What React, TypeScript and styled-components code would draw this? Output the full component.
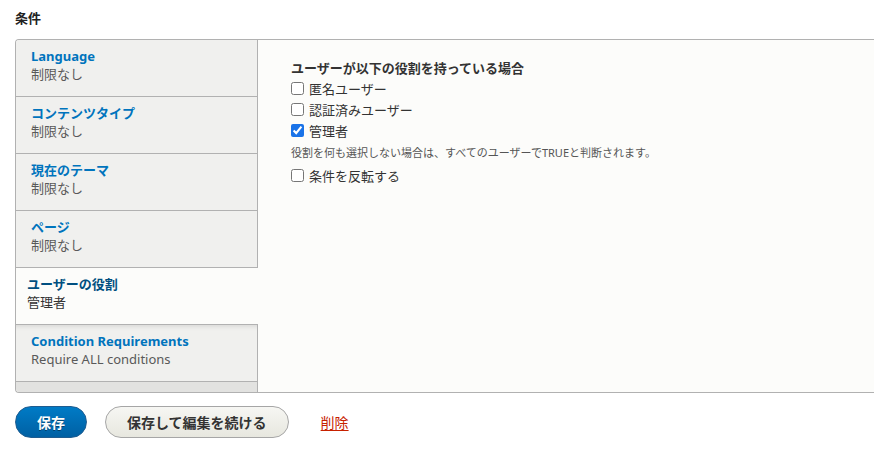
import React from 'react'
import styled, { createGlobalStyle, css } from 'styled-components'

const GlobalStyle = createGlobalStyle`
  html, body {
    margin: 0;
    padding: 0;
    background: #fff;
    overflow: hidden;
  }
  body {
    font-family: 'Noto Sans', 'Noto Sans CJK JP', sans-serif;
    color: #333;
    font-size: 13px;
  }
`

const tabs = [
  { title: 'Language', summary: '制限なし' },
  { title: 'コンテンツタイプ', summary: '制限なし' },
  { title: '現在のテーマ', summary: '制限なし' },
  { title: 'ページ', summary: '制限なし' },
  { title: 'ユーザーの役割', summary: '管理者' },
  { title: 'Condition Requirements', summary: 'Require ALL conditions' },
]

const roles = [
  { label: '匿名ユーザー', checked: false },
  { label: '認証済みユーザー', checked: false },
  { label: '管理者', checked: true },
]

const Page = styled.div`
  width: 900px;
  padding: 9px 0 0 15px;
`

const Heading = styled.h2`
  margin: 0 0 12px;
  font-size: 13px;
  line-height: 18px;
  font-weight: 700;
  color: #222;
`

const TabsBox = styled.div`
  display: flex;
  border: 1px solid #b1b1b1;
  border-right: 0;
  border-radius: 4px 0 0 4px;
  background: #fcfcfa;
  overflow: hidden;
`

const Menu = styled.ul`
  list-style: none;
  margin: 0;
  padding: 0 0 10px;
  width: 241px;
  flex: none;
  background: #e2e2e0;
  border-right: 1px solid #b1b1b1;
`

const MenuItem = styled.li<{ $selected?: boolean; $afterSelected?: boolean }>`
  box-sizing: border-box;
  height: 57px;
  padding: 7px 0 0 15px;
  background: #f0f0ee;
  border-bottom: 1px solid #b1b1b1;
  ${({ $afterSelected }) =>
    $afterSelected &&
    css`
      box-shadow: inset 0 6px 5px -5px rgba(0, 0, 0, 0.12);
    `}
  ${({ $selected }) =>
    $selected &&
    css`
      background: #fcfcfa;
      padding-left: 11px;
      margin-right: -1px;
    `}
`

const TabTitle = styled.a<{ $selected?: boolean }>`
  display: block;
  font-weight: 700;
  font-size: 13px;
  line-height: 18px;
  color: ${({ $selected }) => ($selected ? '#004f80' : '#0074bd')};
  text-decoration: none;
`

const TabSummary = styled.div<{ $selected?: boolean }>`
  font-size: 13px;
  line-height: 18px;
  color: ${({ $selected }) => ($selected ? '#333' : '#595959')};
`

const Pane = styled.div`
  flex: 1;
  padding: 19px 0 0 33px;
`

const FieldTitle = styled.div`
  font-weight: 700;
  font-size: 13px;
  line-height: 18px;
  color: #333;
  margin-bottom: 1px;
`

const CheckRow = styled.label<{ $spaced?: boolean }>`
  display: flex;
  align-items: center;
  gap: 5px;
  height: 21px;
  font-size: 13px;
  color: #333;
  ${({ $spaced }) =>
    $spaced &&
    css`
      margin-top: 4px;
    `}
`

const Checkbox = styled.input`
  margin: 0;
  width: 13px;
  height: 13px;
  accent-color: #1a73e8;
`

const Description = styled.div`
  font-size: 11px;
  line-height: 16px;
  color: #555;
  margin-top: 4px;
`

const Actions = styled.div`
  display: flex;
  align-items: center;
  gap: 18px;
  margin-top: 13px;
`

const Button = styled.button<{ $primary?: boolean }>`
  height: 32px;
  padding: 0 21px;
  border-radius: 20px;
  font-family: 'Noto Sans', 'Noto Sans CJK JP', sans-serif;
  font-size: 14px;
  font-weight: 700;
  cursor: pointer;
  ${({ $primary }) =>
    $primary
      ? css`
          background: linear-gradient(#007bc6, #0060a3);
          border: 1px solid #1e5c90;
          color: #fff;
          text-shadow: 0 1px 0 rgba(0, 0, 0, 0.4);
        `
      : css`
          background: linear-gradient(#f6f6f3, #e7e7df);
          border: 1px solid #a6a6a6;
          color: #333;
        `}
`

const DeleteLink = styled.a`
  margin-left: 14px;
  font-size: 14px;
  color: #c72100;
  text-decoration: underline;
  text-underline-offset: 2px;
`

const App = () => {
  const selected = 4
  return (
    <>
      <GlobalStyle />
      <Page>
        <Heading>条件</Heading>
        <TabsBox>
          <Menu>
            {tabs.map((tab, index) => (
              <MenuItem key={tab.title} $selected={index === selected} $afterSelected={index === selected + 1}>
                <TabTitle href="#" $selected={index === selected}>
                  {tab.title}
                </TabTitle>
                <TabSummary $selected={index === selected}>{tab.summary}</TabSummary>
              </MenuItem>
            ))}
          </Menu>
          <Pane>
            <FieldTitle>ユーザーが以下の役割を持っている場合</FieldTitle>
            {roles.map((role) => (
              <CheckRow key={role.label}>
                <Checkbox type="checkbox" defaultChecked={role.checked} />
                {role.label}
              </CheckRow>
            ))}
            <Description>役割を何も選択しない場合は、すべてのユーザーでTRUEと判断されます。</Description>
            <CheckRow $spaced>
              <Checkbox type="checkbox" />
              条件を反転する
            </CheckRow>
          </Pane>
        </TabsBox>
        <Actions>
          <Button $primary>保存</Button>
          <Button>保存して編集を続ける</Button>
          <DeleteLink href="#">削除</DeleteLink>
        </Actions>
      </Page>
    </>
  )
}

export default App
